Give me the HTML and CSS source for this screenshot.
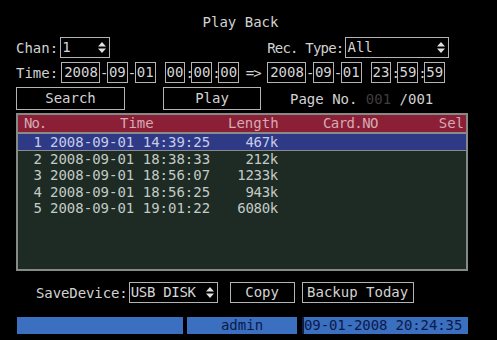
FILE: index.html
```html
<!DOCTYPE html>
<html lang="en">
<head>
  <meta charset="UTF-8">
  <meta name="viewport" content="width=device-width, initial-scale=1.0">
  <title>Play Back</title>
  <link rel="stylesheet" href="styles.css">
</head>
<body>
  <div class="screen">
    <div class="title">Play Back</div>

    <div class="row row-chan">
      <span class="label">Chan:</span>
      <span class="field select chan-select">1
        <svg class="spin" width="8" height="11" viewBox="0 0 8 11"><path d="M4 0 L8 4.5 L0 4.5 Z M0 6.5 L8 6.5 L4 11 Z" fill="#e0e0e0"/></svg>
      </span>
      <span class="label rec-label">Rec. Type:</span>
      <span class="field select rec-select">All
        <svg class="spin" width="8" height="11" viewBox="0 0 8 11"><path d="M4 0 L8 4.5 L0 4.5 Z M0 6.5 L8 6.5 L4 11 Z" fill="#e0e0e0"/></svg>
      </span>
    </div>

    <div class="row row-time">
      <span class="label">Time:</span>
      <span class="date-group first">
        <span class="field year">2008</span><span class="sep dash">-</span><span class="field">09</span><span class="sep dash">-</span><span class="field">01</span><span class="sep gap"></span><span class="field">00</span><span class="sep colon">:</span><span class="field">00</span><span class="sep colon">:</span><span class="field">00</span>
      </span>
      <span class="arrow">=&gt;</span>
      <span class="date-group">
        <span class="field year">2008</span><span class="sep dash">-</span><span class="field">09</span><span class="sep dash">-</span><span class="field">01</span><span class="sep gap"></span><span class="field">23</span><span class="sep colon">:</span><span class="field">59</span><span class="sep colon">:</span><span class="field">59</span>
      </span>
    </div>

    <div class="row row-buttons">
      <button class="btn search">Search</button>
      <button class="btn play">Play</button>
      <span class="page">Page No. <span class="page-dim">001</span> /001</span>
    </div>

    <div class="record-table">
      <div class="table-head">
        <span class="h-no">No.</span>
        <span class="h-time">Time</span>
        <span class="h-length">Length</span>
        <span class="h-card">Card.NO</span>
        <span class="h-sel">Sel</span>
      </div>
      <div class="table-body">
        <div class="rec-row selected"><span class="c-no">1</span><span class="c-time">2008-09-01 14:39:25</span><span class="c-length">467k</span></div>
        <div class="rec-row"><span class="c-no">2</span><span class="c-time">2008-09-01 18:38:33</span><span class="c-length">212k</span></div>
        <div class="rec-row"><span class="c-no">3</span><span class="c-time">2008-09-01 18:56:07</span><span class="c-length">1233k</span></div>
        <div class="rec-row"><span class="c-no">4</span><span class="c-time">2008-09-01 18:56:25</span><span class="c-length">943k</span></div>
        <div class="rec-row"><span class="c-no">5</span><span class="c-time">2008-09-01 19:01:22</span><span class="c-length">6080k</span></div>
      </div>
    </div>

    <div class="row row-save">
      <span class="label">SaveDevice:</span>
      <span class="field select save-select">USB DISK
        <svg class="spin" width="8" height="11" viewBox="0 0 8 11"><path d="M4 0 L8 4.5 L0 4.5 Z M0 6.5 L8 6.5 L4 11 Z" fill="#e0e0e0"/></svg>
      </span>
      <button class="btn copy">Copy</button>
      <button class="btn backup">Backup Today</button>
    </div>

    <div class="status-bar">
      <span class="seg seg-empty"></span>
      <span class="seg seg-user">admin</span>
      <span class="seg seg-clock">09-01-2008 20:24:35</span>
    </div>
  </div>
</body>
</html>
```

FILE: styles.css
```css
body {
  margin: 0;
  background-color: #000;
  font-family: "DejaVu Sans Mono", "Liberation Mono", monospace;
  font-size: 14px;
  color: #d2d2d2;
}

.screen {
  width: 497px;
  height: 340px;
  padding-top: 13px;
  box-sizing: border-box;
  display: flex;
  flex-direction: column;
}

.title {
  height: 18px;
  line-height: 18px;
  text-align: center;
  padding-right: 16px;
}

.row {
  display: flex;
  align-items: center;
  padding-left: 16px;
}

.label {
  white-space: pre;
}

.field {
  display: inline-flex;
  align-items: center;
  border: 1px solid #b4b4b4;
  height: 19px;
  line-height: 19px;
  padding: 0 1px;
  color: #d6d6d6;
}

.field.year {
  padding: 0 1px 0 2px;
}

.select {
  justify-content: space-between;
  box-sizing: border-box;
  height: 21px;
}

.spin {
  margin-right: 2px;
}

/* channel row */
.row-chan {
  margin-top: 6px;
  height: 21px;
}

.chan-select {
  margin-left: 2px;
  width: 50px;
}

.rec-label {
  margin-left: 157px;
  letter-spacing: -0.8px;
}

.rec-select {
  margin-left: 2px;
  width: 104px;
}

/* time row */
.row-time {
  margin-top: 4px;
  height: 21px;
}

.date-group {
  display: flex;
  align-items: center;
}

.date-group.first {
  margin-left: 3px;
}

.sep {
  display: inline-block;
  text-align: center;
}

.sep.dash {
  width: 7px;
}

.sep.colon {
  width: 6px;
}

.sep.gap {
  width: 9px;
}

.arrow {
  width: 28px;
  text-align: center;
  letter-spacing: -1px;
}

/* buttons */
.btn {
  font-family: inherit;
  font-size: 14px;
  color: #d2d2d2;
  background: transparent;
  border: 1px solid #b4b4b4;
  padding: 0;
  margin: 0;
}

.row-buttons {
  margin-top: 4px;
  height: 23px;
}

.row-buttons .btn {
  height: 23px;
  line-height: 21px;
}

.search {
  width: 109px;
}

.play {
  margin-left: 38px;
  width: 98px;
}

.page {
  margin-left: 29px;
  white-space: pre;
}

.page-dim {
  color: #3e3e3e;
}

/* record table */
.record-table {
  margin: 3px 0 0 16px;
  width: 452px;
  height: 158px;
  box-sizing: border-box;
  border: 2px solid #858a86;
  background-color: #1d2b24;
  display: flex;
  flex-direction: column;
}

.table-head {
  height: 17px;
  line-height: 17px;
  background-color: #8b1f36;
  color: #d6aab4;
  border-bottom: 2px solid #8a8a8a;
  position: relative;
}

.table-head span {
  position: absolute;
  top: 0;
}

.h-no { left: 6px; letter-spacing: -1px; }
.h-time { left: 102px; }
.h-length { left: 210px; }
.h-card { left: 305px; letter-spacing: -0.6px; }
.h-sel { right: 2px; }

.table-body {
  flex: 1;
}

.rec-row {
  display: flex;
  height: 16.5px;
  line-height: 17px;
  color: #c4cac4;
}

.rec-row.selected {
  background-color: #2f3a86;
  color: #c8cce8;
  border-bottom: 1px solid #8a8a8a;
  height: 15.5px;
  line-height: 17px;
}

.c-no {
  width: 24px;
  text-align: right;
  padding-right: 8px;
}

.c-time {
  width: 160px;
  white-space: pre;
}

.c-length {
  width: 68px;
  text-align: right;
  letter-spacing: -0.3px;
}

/* save row */
.row-save {
  margin-top: 11px;
  height: 21px;
  padding-left: 36px;
}

.row-save .label {
  letter-spacing: -0.1px;
}

.save-select {
  margin-left: 1px;
  width: 89px;
  letter-spacing: -0.3px;
}

.row-save .btn {
  height: 21px;
  line-height: 19px;
}

.copy {
  margin-left: 12px;
  width: 65px;
}

.backup {
  margin-left: 7px;
  width: 112px;
}

/* status bar */
.status-bar {
  margin: 14px 0 0 17px;
  height: 17px;
  display: flex;
  gap: 4px;
}

.seg {
  background-color: #3b6fc0;
  color: #0c1a4a;
  height: 17px;
  line-height: 17px;
  text-align: center;
  white-space: nowrap;
}

.seg-empty {
  width: 166px;
}

.seg-user {
  width: 110px;
}

.seg-clock {
  width: 166px;
  margin-left: 1px;
  border-left: 2px solid #0c1a4a;
  box-sizing: border-box;
  text-align: left;
  letter-spacing: -0.1px;
}
```
